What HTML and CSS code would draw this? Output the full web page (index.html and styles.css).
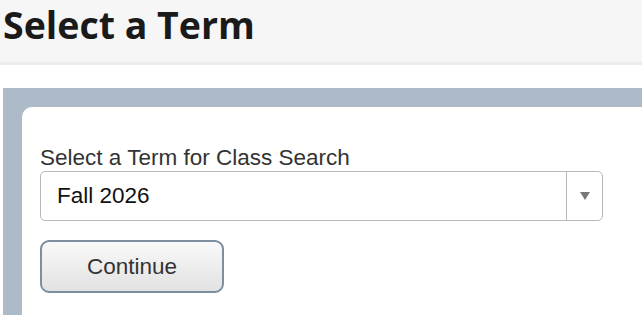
FILE: index.html
```html
<!DOCTYPE html>
<html lang="en">
<head>
    <meta charset="UTF-8">
    <meta name="viewport" content="width=device-width, initial-scale=1.0">
    <title>Select a Term</title>
    <link rel="stylesheet" href="styles.css">
</head>
<body>
    <div class="page-header">
        <h1 class="page-title">Select a Term</h1>
    </div>

    <div class="content">
        <div class="panel">
            <div class="card">
                <label class="field-label" for="termSelect">Select a Term for Class Search</label>
                <div class="select-box" id="termSelect">
                    <span class="select-value">Fall 2026</span>
                    <span class="select-arrow"></span>
                </div>
                <button class="btn-continue" type="button">Continue</button>
            </div>
        </div>
    </div>
</body>
</html>
```

FILE: styles.css
```css
* {
    margin: 0;
    padding: 0;
    box-sizing: border-box;
}

body {
    background: #fff;
    font-family: 'Liberation Sans', Arial, sans-serif;
    color: #333;
    overflow: hidden;
    width: 642px;
    height: 315px;
}

.page-header {
    height: 65px;
    background: #f6f6f6;
    border-bottom: 3px solid #ececec;
    padding-left: 3px;
}

.page-title {
    font-family: 'Open Sans', sans-serif;
    font-weight: 700;
    font-size: 37.5px;
    line-height: 50px;
    color: #1a1a1a;
}

.content {
    padding: 23px 0 0 3px;
}

.panel {
    background: #adbbc8;
    padding: 19px 0 0 19px;
}

.card {
    background: #fff;
    border-top-left-radius: 10px;
    height: 208px;
    padding: 38px 0 0 18px;
}

.field-label {
    display: block;
    font-size: 22.5px;
    line-height: 26px;
    color: #333;
}

.select-box {
    display: flex;
    width: 563px;
    height: 50px;
    border: 1px solid #b7b7b7;
    border-radius: 5px;
}

.select-value {
    flex: 1;
    font-size: 22.5px;
    line-height: 48px;
    padding-left: 16px;
    color: #111;
    border-right: 1px solid #b7b7b7;
}

.select-arrow {
    width: 35px;
    display: flex;
    align-items: center;
    justify-content: center;
}

.select-arrow::after {
    content: '';
    border-left: 5.5px solid transparent;
    border-right: 5.5px solid transparent;
    border-top: 8px solid #777;
}

.btn-continue {
    display: block;
    margin-top: 19px;
    width: 184px;
    height: 53px;
    border: 2px solid #7b8fa1;
    border-radius: 9px;
    background: linear-gradient(180deg, #f9f9f9 0%, #e2e2e2 100%);
    font-family: 'Liberation Sans', Arial, sans-serif;
    font-size: 22.5px;
    color: #333;
}
```
